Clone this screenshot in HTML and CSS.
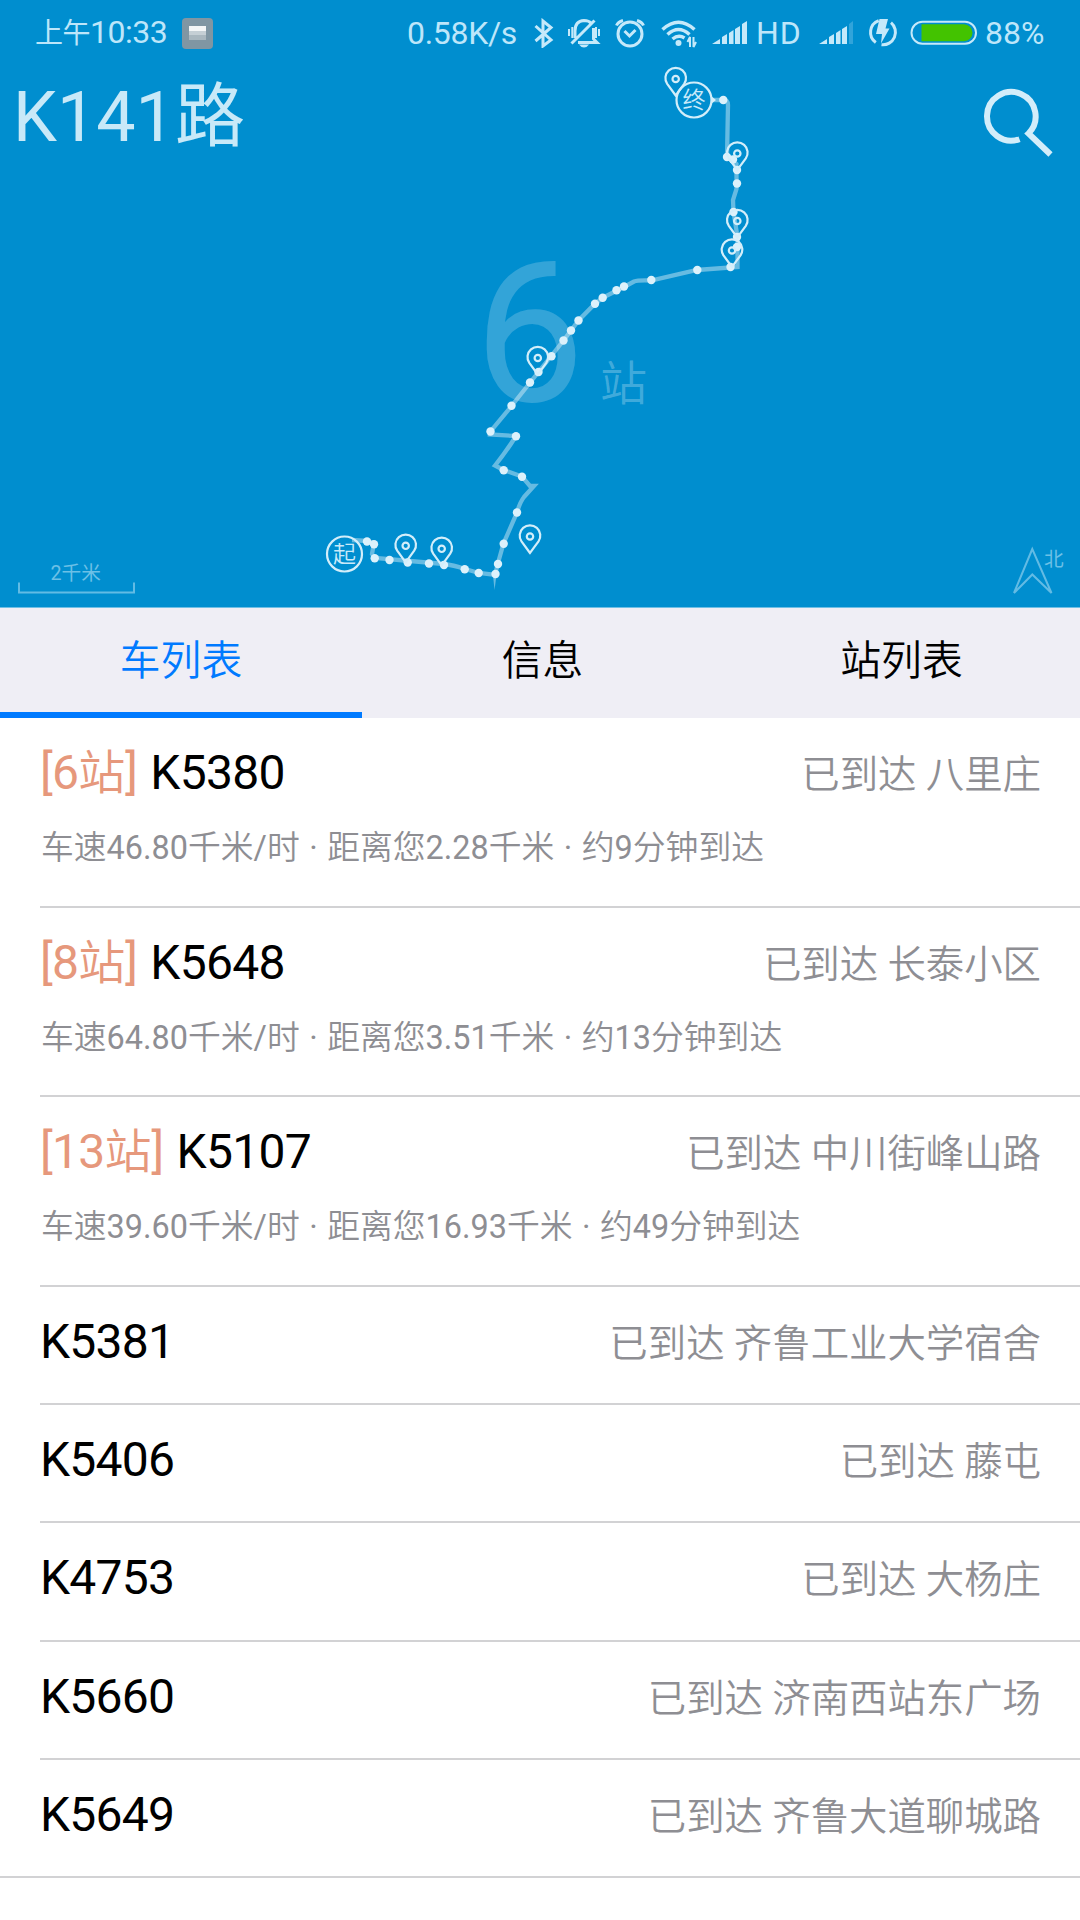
FILE: index.html
```html
<!DOCTYPE html>
<html lang="zh-CN">
<head>
  <meta charset="UTF-8">
  <title>K141路</title>
  <link rel="stylesheet" href="styles.css">
</head>

<body>

  <header class="top">
    <!-- route map -->
    <svg class="map" width="1080" height="607" viewBox="0 0 1080 607">
      <defs>
        <g id="pin">
          <path d="M0 0 L-8.5 -11.600 A10.300 10.300 0 1 1 8.5 -11.600 Z"/>
          <circle cx="0" cy="-16.5" r="3.2"/>
        </g>
      </defs>
      <text class="count" x="474" y="401">6</text>
      <text class="count-unit" x="600" y="400">站</text>

      <path class="route" d="M352 540 L367 541 L374 543 L372 554 L375 558 L444 564 Q453 565 465 569 L479 573 L495 575 L495.500 573 L498 563 L503.500 543.500 L517 512.500 Q520 502 524 497 L534 486 L530 486 L522 476.500 L503.500 470 L495 465.500 Q506 452 516 436 L490 434.500 L490.500 431.500 L511.500 406 L563.500 340.500 L578.500 320.500 L595 303.700 L603 297.500 L624 287 L634 281.500 Q638 280 651 280.500 L697 270 L737.500 267 L737.500 237 L733.500 212 L733 200 L736.500 189 L736.500 164 L727 157 L728 105 Q728 100 723 100 L712 100"/>
      <path class="spike" d="M493 575 L494.500 590 L496.500 575 Z"/>
      <g class="stops">
        <circle cx="367" cy="541.500" r="4.2"/><circle cx="374" cy="544.300" r="4.2"/><circle cx="374.700" cy="558.300" r="4.2"/>
        <circle cx="389.500" cy="560" r="4.2"/><circle cx="407.700" cy="562.500" r="4.2"/><circle cx="429" cy="563.500" r="4.2"/>
        <circle cx="444" cy="565" r="4.2"/><circle cx="464.700" cy="569.200" r="4.2"/><circle cx="478.700" cy="573" r="4.2"/>
        <circle cx="495.500" cy="574" r="4.2"/><circle cx="498" cy="564" r="4.2"/><circle cx="503.700" cy="543.700" r="4.2"/>
        <circle cx="517" cy="512.500" r="4.2"/><circle cx="522" cy="476.700" r="4.2"/><circle cx="503.700" cy="470.300" r="4.2"/>
        <circle cx="516" cy="436.300" r="4.2"/><circle cx="490.500" cy="431.500" r="4.2"/><circle cx="511.500" cy="405.700" r="4.2"/>
        <circle cx="530" cy="382.500" r="4.2"/><circle cx="538.500" cy="372" r="4.2"/><circle cx="551.500" cy="356.300" r="4.2"/>
        <circle cx="563.500" cy="340.500" r="4.2"/><circle cx="571" cy="330.500" r="4.2"/><circle cx="578.500" cy="320.500" r="4.2"/>
        <circle cx="595" cy="303.700" r="4.2"/><circle cx="602.700" cy="297.700" r="4.2"/><circle cx="616.500" cy="290.300" r="4.2"/>
        <circle cx="624" cy="286.500" r="4.2"/><circle cx="651.300" cy="280" r="4.2"/><circle cx="697.300" cy="270" r="4.2"/>
        <circle cx="730.500" cy="267" r="4.2"/><circle cx="737" cy="247" r="4.2"/><circle cx="737" cy="237" r="4.2"/>
        <circle cx="733.500" cy="212" r="4.2"/><circle cx="737" cy="183.500" r="4.2"/><circle cx="737" cy="170" r="4.2"/>
        <circle cx="733" cy="159.500" r="4.2"/><circle cx="727" cy="157" r="4.2"/><circle cx="723.300" cy="100" r="4.2"/>
        <path d="M711 96 L716 100 L711 104 Z"/>
      </g>
      <g class="pins">
        <use href="#pin" x="405.700" y="562.300"/>
        <use href="#pin" x="441.700" y="565.300"/>
        <use href="#pin" x="530" y="553"/>
        <use href="#pin" x="537.800" y="374.500"/>
        <use href="#pin" x="732" y="267"/>
        <use href="#pin" x="737.300" y="237.500"/>
        <use href="#pin" x="737.300" y="170"/>
        <use href="#pin" x="675.700" y="95.500"/>
        <circle cx="694" cy="100" r="17.500"/>
        <circle cx="344.500" cy="554" r="17.500"/>
      </g>
      <text class="end" x="694" y="108">终</text>
      <text class="end" x="344.500" y="562">起</text>

      <path class="thin" d="M19 582.500 V592.500 H134 V582.500"/>
      <text class="small" x="50.500" y="580">2千米</text>
      <path class="thin" d="M1032.300 549 L1014 593 L1032.300 574.500 L1051.500 593 Z"/>
      <text class="small" x="1044" y="566">北</text>
    </svg>

    <div class="status">
      <span class="time"><small>上午</small>10:33</span>
      <span class="app"><i></i></span>
      <span class="speed">0.58K/s</span>
      <svg class="bluetooth" width="20" height="30" viewBox="534 17 20 30"><path class="ln" d="M535.500 25 L551 39 L543 45 V20 L551 26.500 L535.500 40"/></svg>
      <svg class="mute" width="34" height="30" viewBox="567 17 34 30"><path class="ln" d="M575 37 V30 Q575 20 584 19.500 Q589 19.500 591.500 22.500 M593.500 27 V38 L597 41.500 H578 M571.500 42.500 L594.500 19.500"/><path class="ln2" d="M569 28 V35 M572.300 26 V37 M596 26 V37 M599 28 V35"/><path class="fl" d="M579 43.500 H589 Q587 46.500 584 46.500 Q581 46.500 579 43.500"/></svg>
      <svg class="alarm" width="32" height="30" viewBox="614 17 32 30"><circle class="ln" cx="630" cy="33" r="12"/><path class="ln" d="M624.500 30 L629.500 35 L635.500 29 M616.500 24.500 Q618 21 623 19.500 M643.500 24.500 Q642 21 637 19.500"/></svg>
      <svg class="wifi" width="36" height="30" viewBox="661 17 36 30"><path class="ln3" d="M662.500 28.500 Q678.500 14 694.500 28.500 M667.500 33.500 Q678.500 23.500 689.500 33.500 M672.500 38 Q678.500 33 684.500 37"/><circle class="fl" cx="678.500" cy="42" r="3"/><path class="ln2" d="M690 46 V36 L687.500 41 M693.500 36 V46 L696 41"/></svg>
      <svg class="signal" width="36" height="24" viewBox="0 0 36 24"><path class="fl" d="M0 23 L8 18 V23 Z M10 16 L15 13 V23 H10 Z M17 12 L21.500 9 V23 H17 Z M23 8 L28 5 V23 H23 Z M30 3 L35 0 V23 H30 Z"/></svg>
      <span class="hd">HD</span>
      <svg class="signal2" width="36" height="24" viewBox="0 0 36 24"><path class="fl" d="M0 23 L8 18 V23 Z M10 16 L15 13 V23 H10 Z M17 12 L21.500 9 V23 H17 Z M23 8 L28 5 V23 H23 Z"/><path class="fl dim" d="M30 3 L34 0 V23 H30 Z"/></svg>
      <svg class="charge" width="30" height="30" viewBox="868 19 30 30"><path class="ln" d="M878.700 21.600 A12.500 12.500 0 0 0 875.800 43.500 M891 23.700 A12.500 12.500 0 0 1 881.500 45.700"/><path class="fl" d="M879.500 20 H888 L885.500 29.500 H889.500 L881 44.500 L882 35 H876 Z"/></svg>
      <svg class="battery" width="68" height="26" viewBox="0 0 68 26"><rect class="ln2" x="1.500" y="1.700" width="64.500" height="22" rx="11"/><path class="fill" d="M11.500 4.300 H54 A8.500 8.500 0 0 1 54 21.300 H11.500 Z"/></svg>
      <span class="percent">88%</span>
    </div>

    <div class="title-bar">
      <h1>K141路</h1>
      <svg class="search" width="72" height="72" viewBox="982 86 72 72"><path d="M1019.500 139.200 A24.300 24.300 0 1 1 1028.500 133.500 L1050.500 154.500"/></svg>
    </div>
  </header>

  <nav class="tabs">
    <div class="tab active">车列表</div>
    <div class="tab">信息</div>
    <div class="tab">站列表</div>
  </nav>

  <div class="list">
    <div class="bus near">
      <div class="row"><div class="num"><span class="left">[6<b>站</b>]</span> K5380</div><div class="at">已到达 八里庄</div></div>
      <p>车速<b>46.80</b>千米<b>/</b>时 <b>·</b> 距离您<b>2.28</b>千米 <b>·</b> 约<b>9</b>分钟到达</p>
    </div>
    <div class="bus near">
      <div class="row"><div class="num"><span class="left">[8<b>站</b>]</span> K5648</div><div class="at">已到达 长泰小区</div></div>
      <p>车速<b>64.80</b>千米<b>/</b>时 <b>·</b> 距离您<b>3.51</b>千米 <b>·</b> 约<b>13</b>分钟到达</p>
    </div>
    <div class="bus near">
      <div class="row"><div class="num"><span class="left">[13<b>站</b>]</span> K5107</div><div class="at">已到达 中川街峰山路</div></div>
      <p>车速<b>39.60</b>千米<b>/</b>时 <b>·</b> 距离您<b>16.93</b>千米 <b>·</b> 约<b>49</b>分钟到达</p>
    </div>
    <div class="bus">
      <div class="row"><div class="num">K5381</div><div class="at">已到达 齐鲁工业大学宿舍</div></div>
    </div>
    <div class="bus">
      <div class="row"><div class="num">K5406</div><div class="at">已到达 藤屯</div></div>
    </div>
    <div class="bus">
      <div class="row"><div class="num">K4753</div><div class="at">已到达 大杨庄</div></div>
    </div>
    <div class="bus">
      <div class="row"><div class="num">K5660</div><div class="at">已到达 济南西站东广场</div></div>
    </div>
    <div class="bus last">
      <div class="row"><div class="num">K5649</div><div class="at">已到达 齐鲁大道聊城路</div></div>
    </div>
  </div>

</body>
</html>
```

FILE: styles.css
```css
* {
  box-sizing: border-box;
}
body {
  margin: 0;
  width: 1080px;
  height: 1920px;
  overflow: hidden;
  background: #fff;
  color: #000;
  font-family: Roboto, "Noto Sans CJK SC", sans-serif;
}
.top {
  position: relative;
  height: 608px;
  background: #008ecf;
  border-bottom: 1px solid #6fbfe5;
}
.map {
  position: absolute;
  left: 0;
  top: 0;
}
.count {
  font-size: 197px;
  fill: rgba(255,255,255,0.2);
}
.count-unit {
  font-size: 47px;
  font-weight: 350;
  fill: rgba(255,255,255,0.27);
}
.route {
  fill: none;
  stroke: rgba(255,255,255,0.4);
  stroke-width: 4.3;
}
.spike {
  fill: rgba(255,255,255,0.4);
}
.stops {
  fill: #dcf1fb;
}
.pins {
  fill: none;
  stroke: #d3eefa;
  stroke-width: 2.2;
}
.end {
  font-size: 23px;
  font-weight: 350;
  fill: #c9eafa;
  text-anchor: middle;
}
.thin {
  fill: none;
  stroke: #62bbe4;
  stroke-width: 2;
}
.small {
  font-size: 19.7px;
  fill: #6cc0e6;
}

/* status bar */
.status {
  position: relative;
  display: flex;
  align-items: center;
  height: 66px;
  padding-left: 35px;
  font-size: 32px;
  line-height: 68px;
  color: #bde6fa;
  white-space: nowrap;
}
.status svg {
  flex: none;
}
.time {
  width: 147px;
  letter-spacing: -0.5px;
}
.time small {
  font-size: 28px;
}
.app {
  width: 31px;
  height: 31px;
  padding: 8px 7px;
  margin-right: 194px;
  border-radius: 4px;
  background: #8096a3;
}
.app i {
  display: block;
  height: 14px;
  background: linear-gradient(#f4f6f7 35%, #c5cfd5 35%, #c5cfd5 65%, #a9b7bf 65%);
}
.speed {
  width: 127px;
  letter-spacing: -0.3px;
}
.ln, .ln2, .ln3 {
  fill: none;
  stroke: #c5e9fa;
  stroke-width: 3;
}
.ln2 {
  stroke-width: 2;
}
.ln3 {
  stroke-width: 3.5;
}
.fl {
  fill: #c5e9fa;
}
.dim {
  opacity: 0.25;
}
.mute {
  margin-left: 13px;
}
.alarm {
  margin-left: 13px;
}
.wifi {
  margin-left: 15px;
}
.signal {
  margin-left: 15px;
}
.hd {
  width: 62px;
  margin-left: 8px;
  letter-spacing: 1px;
}
.signal2 {
  margin-left: 1px;
}
.charge {
  margin-left: 13px;
}
.battery {
  margin-left: 12px;
}
.battery .fill {
  fill: #43c300;
}
.percent {
  margin-left: 7px;
}

.title-bar {
  position: relative;
  display: flex;
  justify-content: space-between;
  padding: 0 26px 0 13px;
  color: #c8e9f8;
}
h1 {
  margin: 0;
  margin-top: 2px;
  font-size: 70px;
  font-weight: 400;
  line-height: 98px;
}
.search {
  margin-top: 20px;
}
.search path {
  fill: none;
  stroke: #d3edfa;
  stroke-width: 6;
}

/* tabs */
.tabs {
  display: flex;
  height: 110px;
  background: #efeef5;
}
.tab {
  flex: 1;
  padding-left: 2px;
  border-bottom: 6px solid transparent;
  font-size: 40.8px;
  line-height: 106px;
  font-weight: 350;
  text-align: center;
}
.tab.active {
  flex: none;
  width: 362px;
  padding: 0;
  color: #007aff;
  border-color: #007aff;
}

/* bus list */
.bus {
  height: 118.4px;
  margin-left: 40px;
  padding: 0 39px 0 0;
  border-bottom: 2px solid #d2d2d4;
}
.bus.near {
  height: 189.5px;
}
.bus.last {
  margin-left: 0;
  padding-left: 40px;
}
.row {
  display: flex;
  justify-content: space-between;
  height: 112px;
}
.num {
  font-size: 48px;
  line-height: 110px;
  letter-spacing: -0.75px;
  word-spacing: 2px;
}
.left {
  color: #e6987c;
}
.left b {
  font-size: 47px;
  font-weight: 350;
  letter-spacing: 0;
}
.at {
  font-size: 38.4px;
  line-height: 113px;
  font-weight: 350;
  color: #8e8e93;
}
.bus p {
  margin: 0;
  padding-left: 1px;
  color: #8e8e93;
  font-size: 32.8px;
  font-weight: 350;
  line-height: 36px;
  word-spacing: 1.5px;
}
.bus p b {
  font-weight: 400;
  font-size: 32.4px;
}
```
